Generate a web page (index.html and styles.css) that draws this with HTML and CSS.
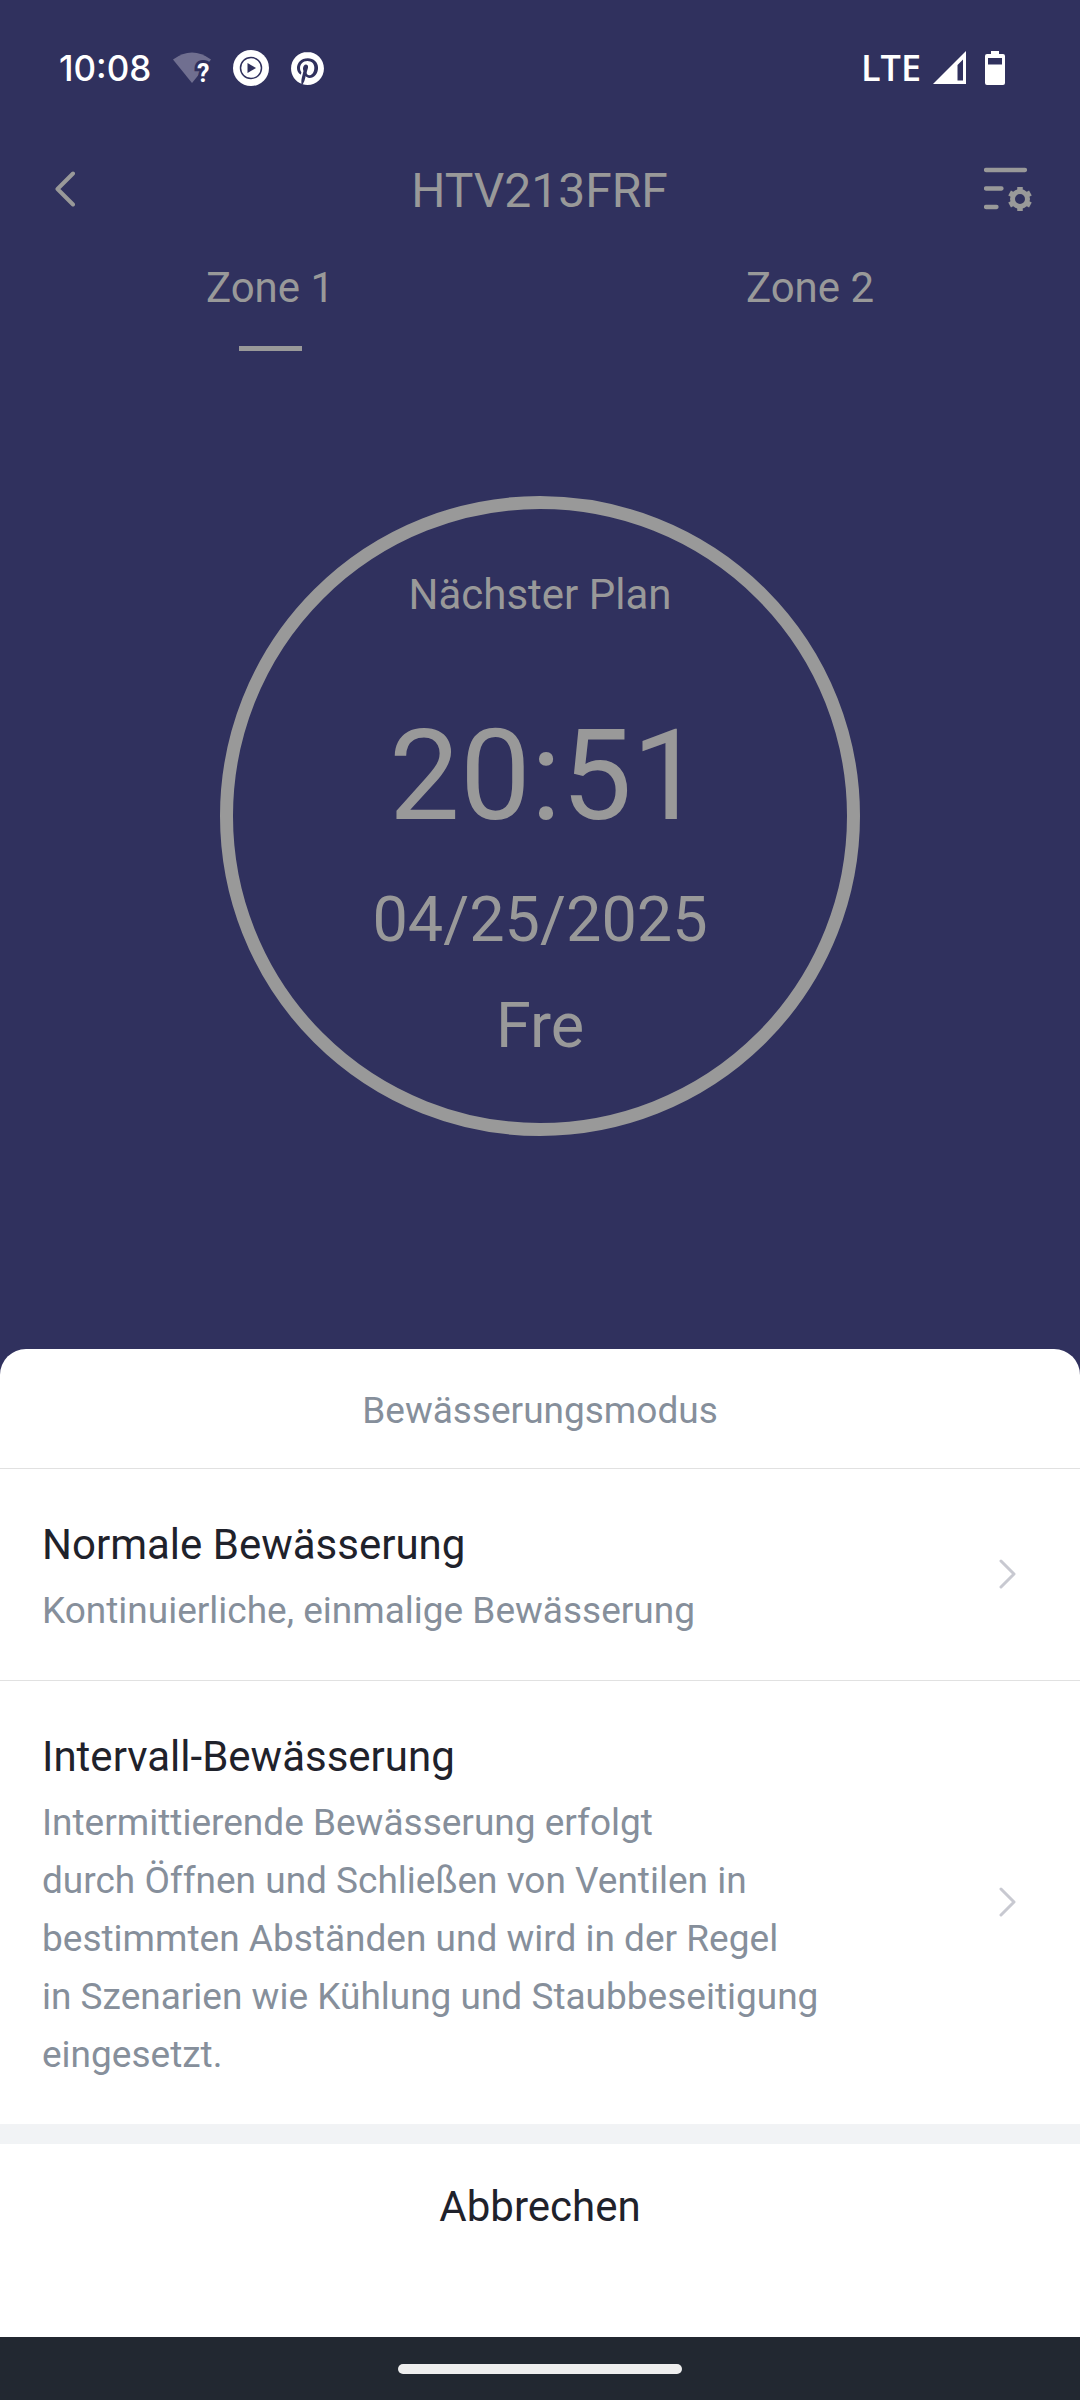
FILE: index.html
```html
<!DOCTYPE html>
<html lang="de">
<head>
<meta charset="utf-8">
<meta name="viewport" content="width=device-width, initial-scale=1">
<title>HTV213FRF</title>
<link rel="stylesheet" href="styles.css">
</head>
<body>
<div class="screen">
  <div class="status-bar">
    <div class="status-left">
      <span class="clock">10:08</span>
      <svg class="icon-wifi" width="38" height="34" viewBox="0 0 38 34" aria-hidden="true">
        <path class="wifi-fan" d="M0 8.500Q19-5.500 38 8.500L19 32Z"/>
        <text class="wifi-mark" x="24" y="31">?</text>
      </svg>
      <svg width="36" height="36" viewBox="0 0 36 36" aria-hidden="true">
        <circle cx="18" cy="18" r="18" fill="#fff"/>
        <circle cx="18" cy="18" r="10.500" fill="none" stroke="#30315e" stroke-width="1.500"/>
        <path d="M14.500 13L23 18L14.500 23Z" fill="#30315e"/>
      </svg>
      <svg width="33" height="33" viewBox="0 0 24 24" aria-hidden="true">
        <path fill="#fff" d="M12.017 0C5.396 0 .029 5.367.029 11.987c0 5.079 3.158 9.417 7.618 11.162-.105-.949-.199-2.403.041-3.439.219-.937 1.406-5.957 1.406-5.957s-.359-.72-.359-1.781c0-1.663.967-2.911 2.168-2.911 1.024 0 1.518.769 1.518 1.688 0 1.029-.653 2.567-.992 3.992-.285 1.193.6 2.165 1.775 2.165 2.128 0 3.768-2.245 3.768-5.487 0-2.861-2.063-4.869-5.008-4.869-3.41 0-5.409 2.562-5.409 5.199 0 1.033.394 2.143.889 2.741.099.12.112.225.085.345-.09.375-.293 1.199-.334 1.363-.053.225-.172.271-.401.165-1.495-.69-2.433-2.878-2.433-4.646 0-3.776 2.748-7.252 7.92-7.252 4.158 0 7.392 2.967 7.392 6.923 0 4.135-2.607 7.462-6.233 7.462-1.214 0-2.354-.629-2.758-1.379l-.749 2.848c-.269 1.045-1.004 2.352-1.498 3.146 1.123.345 2.306.535 3.55.535 6.607 0 11.985-5.365 11.985-11.987C23.97 5.39 18.592.026 11.985.026L12.017 0z"/>
      </svg>
    </div>
    <div class="status-right">
      <span class="network">LTE</span>
      <svg class="icon-signal" width="33" height="34" viewBox="0 0 33 34" aria-hidden="true">
        <path fill="#fff" fill-rule="evenodd" d="M0 33L33 0V33ZM24.500 14V29.500H30V8.500Z"/>
      </svg>
      <svg width="20" height="34" viewBox="0 0 20 34" aria-hidden="true">
        <path fill="#fff" fill-rule="evenodd" d="M6 0H14V3H18Q20 3 20 5V32Q20 34 18 34H2Q0 34 0 32V5Q0 3 2 3H6ZM3 7V13.500H17V7Z"/>
      </svg>
    </div>
  </div>

  <header class="app-bar">
    <button class="icon-button" type="button" aria-label="Zurück">
      <svg width="20" height="36" viewBox="0 0 20 36" fill="none" stroke="#999" stroke-width="4" stroke-linecap="round" stroke-linejoin="round">
        <path d="M18 2.500L2.500 18L18 33.500"/>
      </svg>
    </button>
    <h1 class="title">HTV213FRF</h1>
    <button class="icon-button" type="button" aria-label="Einstellungen">
      <svg width="48" height="44" viewBox="0 0 48 44" fill="none" stroke="#999" stroke-width="4.300" stroke-linecap="round">
        <path d="M2 3H41M2 21.500H17.500M2 40H12.500"/>
        <circle cx="36" cy="32" r="7.500" stroke-width="5"/>
        <path stroke-width="5.500" stroke-linecap="butt" d="M36 24.500V20M36 39.500V44M42.500 28.200L46.400 26M29.500 35.800L25.600 38M42.500 35.800L46.400 38M29.500 28.200L25.600 26"/>
      </svg>
    </button>
  </header>

  <nav class="tabs">
    <button class="tab tab-active" type="button">Zone 1</button>
    <button class="tab" type="button">Zone 2</button>
  </nav>

  <main class="plan">
    <div class="dial">
      <div class="dial-label">Nächster Plan</div>
      <div class="dial-time">20:51</div>
      <div class="dial-date">04/25/2025</div>
      <div class="dial-date">Fre</div>
    </div>
  </main>

  <section class="sheet" aria-labelledby="sheet-title">
    <h2 class="sheet-title" id="sheet-title">Bewässerungsmodus</h2>
    <button class="option" type="button">
      <span class="option-text">
        <span class="option-name">Normale Bewässerung</span>
        <span class="option-info">Kontinuierliche, einmalige Bewässerung</span>
      </span>
      <svg class="chevron" width="17" height="30" viewBox="0 0 17 30" aria-hidden="true"><path d="M2 2L15 15L2 28"/></svg>
    </button>
    <button class="option" type="button">
      <span class="option-text">
        <span class="option-name">Intervall-Bewässerung</span>
        <span class="option-info">Intermittierende Bewässerung erfolgt<br>durch Öffnen und Schließen von Ventilen in bestimmten Abständen und wird in der Regel in&nbsp;Szenarien wie Kühlung und Staubbeseitigung eingesetzt.</span>
      </span>
      <svg class="chevron" width="17" height="30" viewBox="0 0 17 30" aria-hidden="true"><path d="M2 2L15 15L2 28"/></svg>
    </button>
    <button class="cancel" type="button">Abbrechen</button>
  </section>

  <div class="gesture-bar"><span class="gesture-pill"></span></div>
</div>
</body>
</html>
```
FILE: styles.css
```css
* {
  box-sizing: border-box;
}

body {
  margin: 0;
  background: #30315e;
  font-family: Roboto, "Liberation Sans", sans-serif;
  font-size: 42px;
  line-height: 58px;
}

button {
  margin: 0;
  padding: 0;
  border: 0;
  background: none;
  color: inherit;
  font: inherit;
}

svg {
  display: block;
  flex: none;
}

h1,
h2 {
  margin: 0;
  font-weight: 400;
}

.screen {
  display: flex;
  flex-direction: column;
  min-height: 100vh;
  color: #999;
}

/* System status bar */
.status-bar {
  display: flex;
  justify-content: space-between;
  align-items: center;
  padding: 39px 75px 38px 59px;
  color: #fff;
}

.status-left,
.status-right {
  display: flex;
  align-items: center;
}

.status-left {
  gap: 22px;
}

.clock {
  font-family: Inter, Roboto, sans-serif;
  font-size: 35px;
  font-weight: 500;
}

.icon-wifi {
  overflow: visible;
}

.wifi-fan {
  fill: #706f90;
}

.wifi-mark {
  fill: #fff;
  stroke: #30315e;
  stroke-width: 6px;
  paint-order: stroke;
  font-size: 25px;
  font-weight: 700;
}

.network {
  font-family: "Open Sans", "Noto Sans", sans-serif;
  font-size: 36px;
  font-weight: 600;
}

.icon-signal {
  margin: 0 19px 0 12px;
}

/* App bar */
.app-bar {
  display: flex;
  justify-content: space-between;
  align-items: center;
  padding: 27px 48px 23px 55px;
}

.icon-button {
  display: flex;
  align-items: center;
  padding-bottom: 4px;
}

.title {
  flex: 1;
  padding-left: 20px;
  font-size: 48px;
  text-align: center;
}

/* Zone tabs */
.tabs {
  display: grid;
  grid-template-columns: 1fr 1fr;
  padding-top: 16px;
}

.tab {
  display: flex;
  flex-direction: column;
  align-items: center;
  gap: 29px;
}

.tab::after {
  content: "";
  width: 63px;
  height: 5px;
}

.tab-active::after {
  background: #999;
}

/* Next plan dial */
.plan {
  flex: 1;
  display: flex;
  justify-content: center;
  align-items: flex-start;
  padding: 145px 24px 213px;
}

.dial {
  width: 640px;
  aspect-ratio: 1;
  padding-top: 57px;
  border: 13px solid #999;
  border-radius: 50%;
  text-align: center;
}

.dial-time {
  margin-top: 61px;
  padding-left: 12px;
  font-size: 126px;
  line-height: 182px;
}

.dial-date {
  font-size: 63px;
  line-height: 106px;
}

/* Bottom sheet */
.sheet {
  border-radius: 26px 26px 0 0;
  background: #fff;
  color: #1f222b;
}

.sheet-title {
  padding: 33px 42px 28px;
  color: #868f9b;
  font-size: 37px;
  text-align: center;
}

.option {
  display: flex;
  justify-content: space-between;
  align-items: center;
  width: 100%;
  padding: 47px 64px 40px 42px;
  border-top: 1px solid #e1e1e1;
  text-align: left;
}

.option-text {
  display: flex;
  flex-direction: column;
  gap: 8px;
  max-width: 800px;
}

.option-info {
  color: #868f9b;
  font-size: 37px;
}

.chevron {
  margin-bottom: 8px;
  fill: none;
  stroke: #c8c9d1;
  stroke-width: 3px;
  stroke-linecap: round;
  stroke-linejoin: round;
}

.cancel {
  display: block;
  width: 100%;
  padding: 34px 42px 101px;
  border-top: 20px solid #f1f3f5;
}

/* System gesture bar */
.gesture-bar {
  display: flex;
  justify-content: center;
  padding: 27px 0 26px;
  background: #222831;
}

.gesture-pill {
  width: 284px;
  height: 10px;
  border-radius: 5px;
  background: #eee;
}
```
